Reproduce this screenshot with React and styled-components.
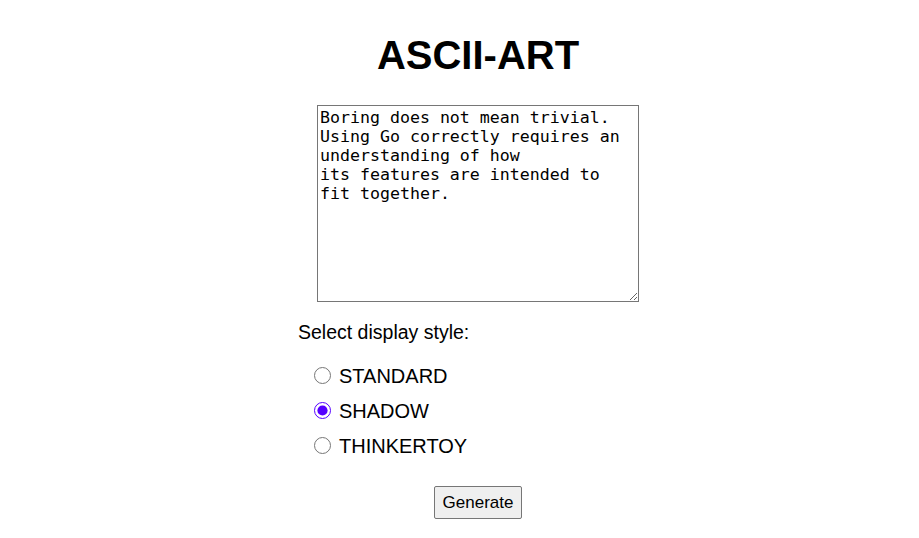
import { useState } from "react";
import styled, { createGlobalStyle } from "styled-components";

const GlobalStyle = createGlobalStyle`
  body {
    margin: 0;
    background: #fff;
    font-family: "Liberation Sans", Arial, sans-serif;
    color: #000;
  }
`;

const Page = styled.div`
  display: flex;
  flex-direction: column;
  align-items: center;
  padding-left: 37px;
`;

const Title = styled.h1`
  font-size: 40px;
  font-weight: bold;
  line-height: 46px;
  margin: 32px 0 27px;
`;

const Form = styled.form`
  display: flex;
  flex-direction: column;
  align-items: center;
`;

const TextBox = styled.textarea`
  display: block;
  box-sizing: border-box;
  width: 322px;
  height: 197px;
  margin: 0;
  padding: 2px;
  border: 1px solid #767676;
  border-radius: 0;
  font-family: "DejaVu Sans Mono", monospace;
  font-size: 16.6px;
  line-height: 19px;
  color: #000;
  resize: both;
`;

const Options = styled.div`
  width: 360px;
  display: flex;
  flex-direction: column;
  margin-top: 19px;
`;

const Legend = styled.div`
  font-size: 19.5px;
  line-height: 23px;
  margin-bottom: 15px;
`;

const OptionRow = styled.label`
  display: flex;
  align-items: center;
  gap: 8px;
  padding: 6px 0 6px 16px;
  font-size: 20px;
  line-height: 23px;
`;

const Radio = styled.input`
  width: 17px;
  height: 17px;
  margin: 0 0 2px;
  accent-color: #5500ff;
`;

const Button = styled.button`
  margin-top: 22px;
  font-family: "Liberation Sans", Arial, sans-serif;
  font-size: 17px;
  line-height: 19px;
  padding: 6px 8px;
  color: #000;
  background: #efefef;
  border: 1px solid #767676;
  border-radius: 2px;
`;

const STYLES = ["STANDARD", "SHADOW", "THINKERTOY"];

const TEXT = `Boring does not mean trivial.
Using Go correctly requires an understanding of how
its features are intended to fit together.`;

export default function App() {
  const [style, setStyle] = useState("SHADOW");
  const [text, setText] = useState(TEXT);

  return (
    <Page>
      <GlobalStyle />
      <Title>ASCII-ART</Title>
      <Form onSubmit={(e) => e.preventDefault()}>
        <TextBox value={text} onChange={(e) => setText(e.target.value)} />
        <Options>
          <Legend>Select display style:</Legend>
          {STYLES.map((s) => (
            <OptionRow key={s}>
              <Radio
                type="radio"
                name="banner"
                value={s}
                checked={style === s}
                onChange={() => setStyle(s)}
              />
              {s}
            </OptionRow>
          ))}
        </Options>
        <Button type="submit">Generate</Button>
      </Form>
    </Page>
  );
}
